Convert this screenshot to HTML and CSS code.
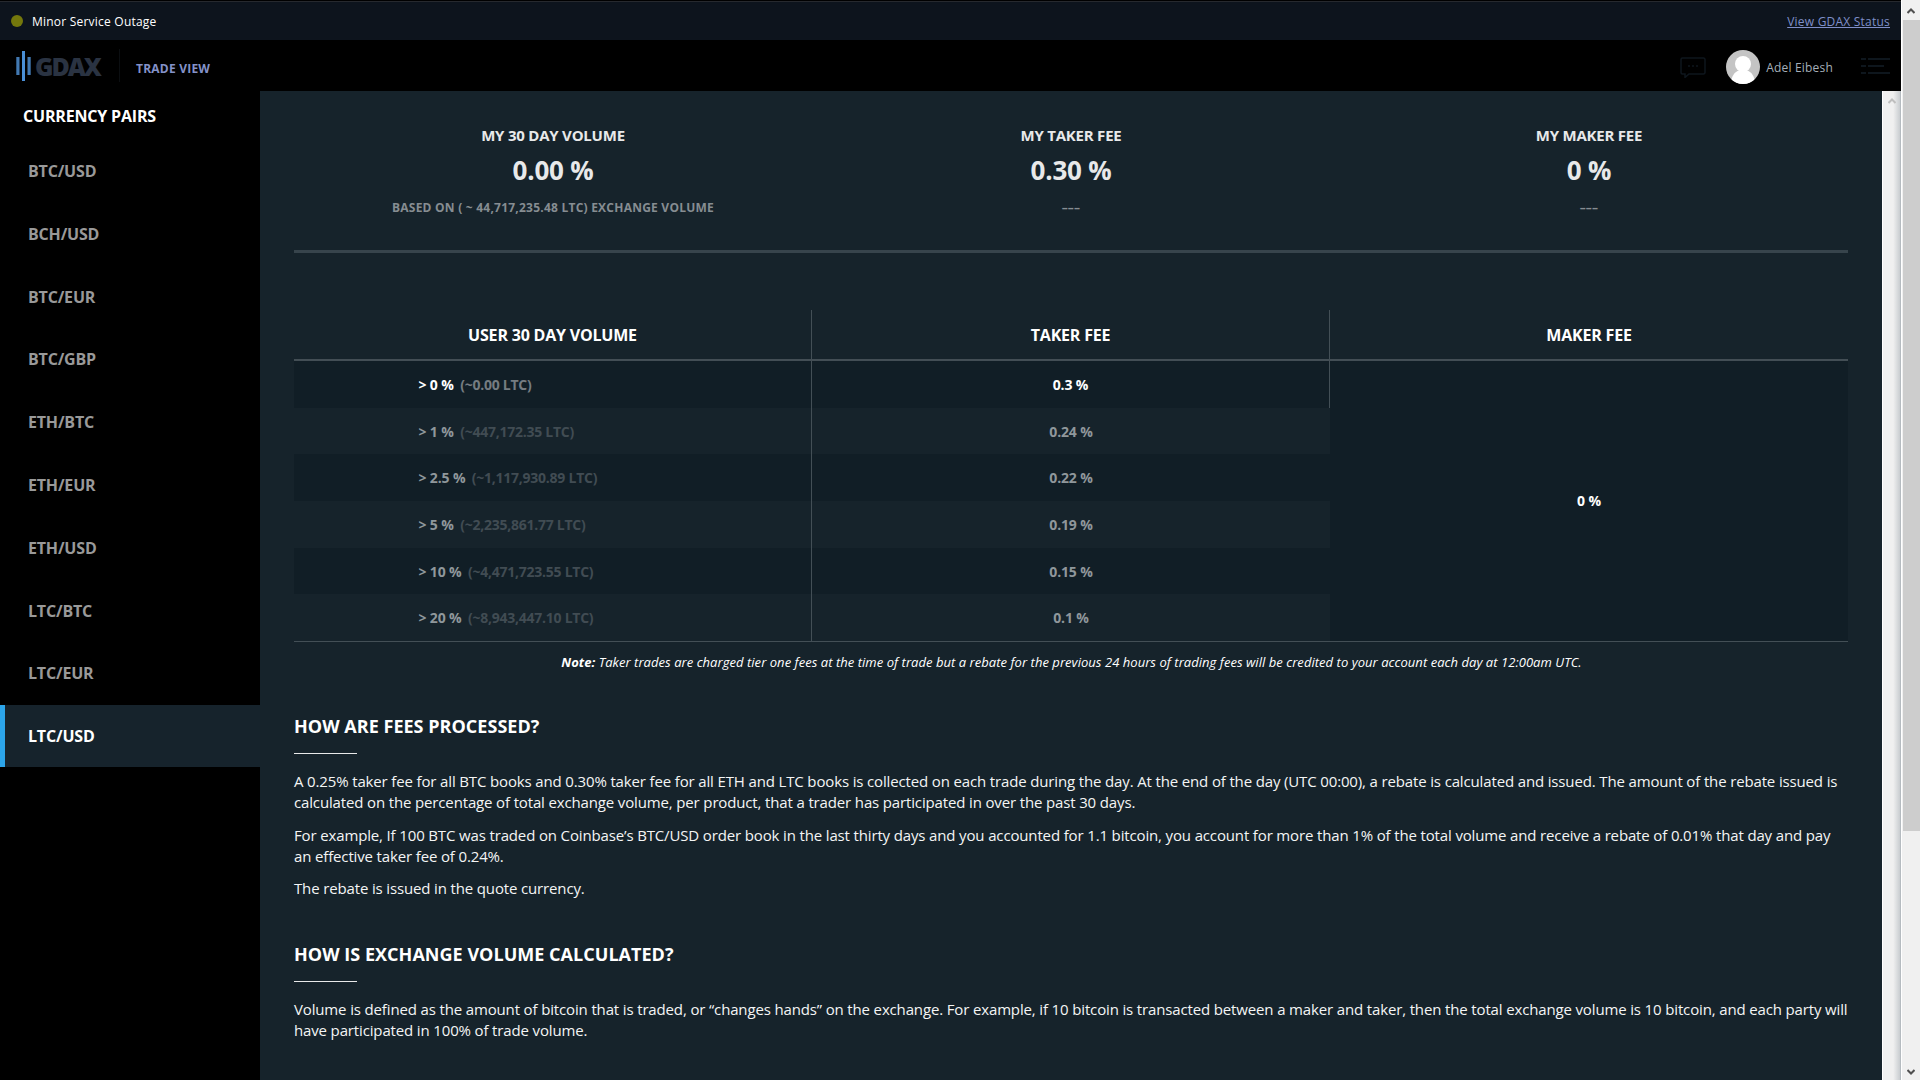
FILE: index.html
```html
<!DOCTYPE html>
<html lang="en">
<head>
    <meta charset="UTF-8">
    <title>GDAX | Fees</title>
    <link rel="stylesheet" href="styles.css">
</head>
<body>
    <div class="page">
        <div class="status-bar">
            <span class="status-dot"></span>
            <span class="status-text">Minor Service Outage</span>
            <a class="status-link" href="#">View GDAX Status</a>
        </div>

        <header class="header">
            <div class="logo">
                <svg width="16" height="30" viewBox="0 0 16 30">
                    <rect x="0.300" y="6" width="3.200" height="18" fill="#4279b2"/>
                    <rect x="6" y="0" width="3" height="30" fill="#4a8fd6"/>
                    <rect x="11.500" y="6" width="3.200" height="18" fill="#4279b2"/>
                </svg>
                <span class="logo-text">GDAX</span>
            </div>
            <a class="trade-view" href="#">TRADE VIEW</a>
            <div class="user">
                <svg class="chat-icon" width="26" height="21" viewBox="0 0 26 21" fill="none" stroke="#0e161d" stroke-width="1.5">
                    <path d="M2.5 1h21a1.500 1.500 0 0 1 1.500 1.500v13a1.500 1.500 0 0 1-1.500 1.500H9l-4 3.500V17H2.500A1.500 1.500 0 0 1 1 15.500v-13A1.500 1.500 0 0 1 2.500 1z"/>
                    <path d="M8 9h2M12 9h2M16 9h2"/>
                </svg>
                <svg class="avatar" width="34" height="34" viewBox="0 0 34 34">
                    <clipPath id="round"><circle cx="17" cy="17" r="17"/></clipPath>
                    <g clip-path="url(#round)">
                        <rect width="34" height="34" fill="#c4c4c4"/>
                        <circle cx="17" cy="14" r="8" fill="#fff"/>
                        <path d="M5 34c0-8 4-12.500 8-13.500h8c4 1 8 5.500 8 13.500z" fill="#fff"/>
                    </g>
                </svg>
                <span class="user-name">Adel Eibesh</span>
                <svg class="menu-icon" width="29" height="16" viewBox="0 0 29 16" stroke="#0e161d" stroke-width="2">
                    <path d="M0 1h5M7 1h22M0 8h5M7 8h16M0 15h5M7 15h22"/>
                </svg>
            </div>
        </header>

        <div class="body">
            <aside class="sidebar">
                <h2>CURRENCY PAIRS</h2>
                <a href="#">BTC/USD</a>
                <a href="#">BCH/USD</a>
                <a href="#">BTC/EUR</a>
                <a href="#">BTC/GBP</a>
                <a href="#">ETH/BTC</a>
                <a href="#">ETH/EUR</a>
                <a href="#">ETH/USD</a>
                <a href="#">LTC/BTC</a>
                <a href="#">LTC/EUR</a>
                <a href="#" class="active">LTC/USD</a>
            </aside>

            <main class="content">
                <section class="stats">
                    <div class="stat">
                        <h3>MY 30 DAY VOLUME</h3>
                        <div class="value">0.00 %</div>
                        <div class="sub">BASED ON ( ~ 44,717,235.48 LTC) EXCHANGE VOLUME</div>
                    </div>
                    <div class="stat">
                        <h3>MY TAKER FEE</h3>
                        <div class="value">0.30 %</div>
                        <div class="sub">–––</div>
                    </div>
                    <div class="stat">
                        <h3>MY MAKER FEE</h3>
                        <div class="value">0 %</div>
                        <div class="sub">–––</div>
                    </div>
                </section>

                <section class="fees">
                    <div class="head line">USER 30 DAY VOLUME</div>
                    <div class="head line">TAKER FEE</div>
                    <div class="head">MAKER FEE</div>

                    <div class="cell vol dark line current">&gt; 0 % <span>(~0.00 LTC)</span></div>
                    <div class="cell dark line current">0.3 %</div>
                    <div class="cell maker dark current">0 %</div>

                    <div class="cell vol line">&gt; 1 % <span>(~447,172.35 LTC)</span></div>
                    <div class="cell">0.24 %</div>

                    <div class="cell vol dark line">&gt; 2.5 % <span>(~1,117,930.89 LTC)</span></div>
                    <div class="cell dark">0.22 %</div>

                    <div class="cell vol line">&gt; 5 % <span>(~2,235,861.77 LTC)</span></div>
                    <div class="cell">0.19 %</div>

                    <div class="cell vol dark line">&gt; 10 % <span>(~4,471,723.55 LTC)</span></div>
                    <div class="cell dark">0.15 %</div>

                    <div class="cell vol line">&gt; 20 % <span>(~8,943,447.10 LTC)</span></div>
                    <div class="cell">0.1 %</div>
                </section>

                <p class="note"><b>Note:</b> Taker trades are charged tier one fees at the time of trade but a rebate for the previous 24 hours of trading fees will be credited to your account each day at 12:00am UTC.</p>

                <section class="faq">
                    <h2>HOW ARE FEES PROCESSED?</h2>
                    <p>A 0.25% taker fee for all BTC books and 0.30% taker fee for all ETH and LTC books is collected on each trade during the day. At the end of the day (UTC 00:00), a rebate is calculated and issued. The amount of the rebate issued is<br>calculated on the percentage of total exchange volume, per product, that a trader has participated in over the past 30 days.</p>
                    <p>For example, If 100 BTC was traded on Coinbase’s BTC/USD order book in the last thirty days and you accounted for 1.1 bitcoin, you account for more than 1% of the total volume and receive a rebate of 0.01% that day and pay<br>an effective taker fee of 0.24%.</p>
                    <p>The rebate is issued in the quote currency.</p>
                </section>

                <section class="faq">
                    <h2>HOW IS EXCHANGE VOLUME CALCULATED?</h2>
                    <p>Volume is defined as the amount of bitcoin that is traded, or “changes hands” on the exchange. For example, if 10 bitcoin is transacted between a maker and taker, then the total exchange volume is 10 bitcoin, and each party will<br>have participated in 100% of trade volume.</p>
                </section>
            </main>

            <div class="inner-scroll">
                <svg width="8" height="6" viewBox="0 0 8 6" fill="none" stroke="#bfbfbf" stroke-width="2"><path d="M0.500 5L4 1.500 7.500 5"/></svg>
            </div>
        </div>
    </div>

    <div class="scrollbar">
        <svg width="8" height="6" viewBox="0 0 8 6" fill="none" stroke="#505050" stroke-width="2"><path d="M0.500 5L4 1.500 7.500 5"/></svg>
        <div class="thumb"></div>
        <svg width="8" height="6" viewBox="0 0 8 6" fill="none" stroke="#505050" stroke-width="2"><path d="M0.500 1L4 4.500 7.500 1"/></svg>
    </div>
</body>
</html>
```
FILE: styles.css
```css
* {
    box-sizing: border-box;
}

body {
    margin: 0;
    height: 1080px;
    display: flex;
    overflow: hidden;
    background: #000;
    color: #fff;
    font-family: "Open Sans", sans-serif;
}

h2, h3, p {
    margin: 0;
}

a {
    text-decoration: none;
}

.page {
    width: 1901px;
    height: 1080px;
    display: flex;
    flex-direction: column;
}

/* status bar */
.status-bar {
    height: 39px;
    margin-top: 1px;
    border-top: 1px solid #26292e;
    padding: 0 11px;
    display: flex;
    align-items: center;
    background: #0d141d;
    font-size: 12px;
    letter-spacing: 0.22px;
}

.status-dot {
    width: 12px;
    height: 12px;
    margin-right: 9px;
    border-radius: 50%;
    background: #74780c;
}

.status-link {
    margin-left: auto;
    color: #7f8fc9;
    text-decoration: underline;
}

/* header */
.header {
    height: 51px;
    display: flex;
    align-items: center;
    background: #000;
}

.logo {
    width: 120px;
    height: 33px;
    padding-left: 16px;
    display: flex;
    align-items: center;
    border-right: 1px solid #0b0e11;
}

.logo-text {
    margin-left: 3px;
    color: #2a3342;
    font-size: 25px;
    font-weight: 800;
    line-height: 30px;
    letter-spacing: -2.1px;
}

.trade-view {
    margin: 6px 0 0 16px;
    color: #8492c9;
    font-size: 12px;
    font-weight: bold;
    letter-spacing: 0.22px;
}

.user {
    margin-left: auto;
    padding: 2px 11px 0 0;
    display: flex;
    align-items: center;
}

.chat-icon {
    margin: 2px 20px 0 0;
}

.user-name {
    margin: 1px 28px 0 6px;
    color: #a5afb9;
    font-size: 12px;
    letter-spacing: 0.2px;
}

.menu-icon {
    margin-bottom: 2px;
}

/* layout */
.body {
    flex: 1;
    min-height: 0;
    display: flex;
}

.sidebar {
    width: 260px;
    display: flex;
    flex-direction: column;
    background: #000;
    letter-spacing: -0.18px;
}

.sidebar h2 {
    height: 49px;
    padding: 14px 0 0 23px;
    font-size: 16px;
    line-height: 22px;
}

.sidebar a {
    height: 62.8px;
    flex: none;
    padding-left: 28px;
    color: #999;
    font-size: 16px;
    font-weight: bold;
    line-height: 62px;
}

.sidebar .active {
    height: 62px;
    padding-left: 23px;
    border-left: 5px solid #2ca5ea;
    background: #16232c;
    color: #fff;
}

.content {
    width: 1622px;
    padding: 0 34px;
    overflow: hidden;
    background: #16232b;
}

/* summary */
.stats {
    height: 162px;
    padding-top: 34px;
    display: grid;
    grid-template-columns: repeat(3, 1fr);
    border-bottom: 3px solid #37444c;
    text-align: center;
}

.stat h3 {
    color: #e8e9ea;
    font-size: 15px;
    line-height: 20px;
    letter-spacing: -0.22px;
}

.stat .value {
    margin-top: 7px;
    color: #e8e9ea;
    font-size: 26px;
    font-weight: bold;
    line-height: 36px;
    letter-spacing: -0.2px;
}

.stat .sub {
    margin-top: 12px;
    color: #868d92;
    font-size: 12px;
    font-weight: bold;
    line-height: 16px;
    letter-spacing: 0.23px;
}

/* fee table */
.fees {
    margin-top: 57px;
    display: grid;
    grid-template-columns: repeat(3, 1fr);
    grid-template-rows: 51px repeat(6, 46.67px);
    border-bottom: 1px solid #434f56;
    text-align: center;
    font-weight: bold;
}

.head {
    border-bottom: 2px solid #434e55;
    font-size: 16px;
    line-height: 50px;
    letter-spacing: -0.2px;
}

.cell {
    color: #8f979b;
    font-size: 14px;
    line-height: 47.500px;
    letter-spacing: -0.15px;
}

.vol {
    padding-left: 124.500px;
    text-align: left;
}

.vol span {
    margin-left: 3px;
    color: #414c53;
    letter-spacing: -0.25px;
}

.dark {
    background: #111e26;
}

.line {
    border-right: 1px solid #434f56;
}

.current {
    color: #fff;
}

.current span {
    color: #757c81;
}

.maker {
    grid-column: 3;
    grid-row: 2 / 8;
    line-height: 280px;
}

.note {
    margin-top: 11px;
    padding-left: 1px;
    text-align: center;
    font-size: 13px;
    font-style: italic;
    line-height: 18px;
    letter-spacing: 0.043px;
}

/* questions */
.faq {
    margin-top: 43px;
    white-space: nowrap;
}

.faq + .faq {
    margin-top: 42px;
}

.faq h2 {
    margin-bottom: 17px;
    font-size: 18px;
    line-height: 24px;
    letter-spacing: 0.03px;
}

.faq h2::after {
    content: "";
    display: block;
    width: 63px;
    height: 1px;
    margin-top: 15px;
    background: #e8e9ea;
}

.faq p {
    margin-bottom: 10.800px;
    color: #f4f5f5;
    font-size: 15px;
    line-height: 21.400px;
    letter-spacing: -0.145px;
}

/* scrollbars */
.inner-scroll {
    width: 19px;
    padding: 7px 0 0 5px;
    border-left: 1px solid #fff;
    border-right: 1px solid #b5bbc0;
    background: linear-gradient(to right, #f0f0f0 60%, #c9cdd0);
    line-height: 0;
}

.scrollbar {
    width: 19px;
    height: 1080px;
    padding: 8px 1px 5px;
    display: flex;
    flex-direction: column;
    align-items: center;
    background: #f0f0f0;
    border-left: 1px solid #fff;
}

.thumb {
    width: 17px;
    height: 811px;
    margin: 6px 0 auto;
    background: #cdcdcd;
}
```
